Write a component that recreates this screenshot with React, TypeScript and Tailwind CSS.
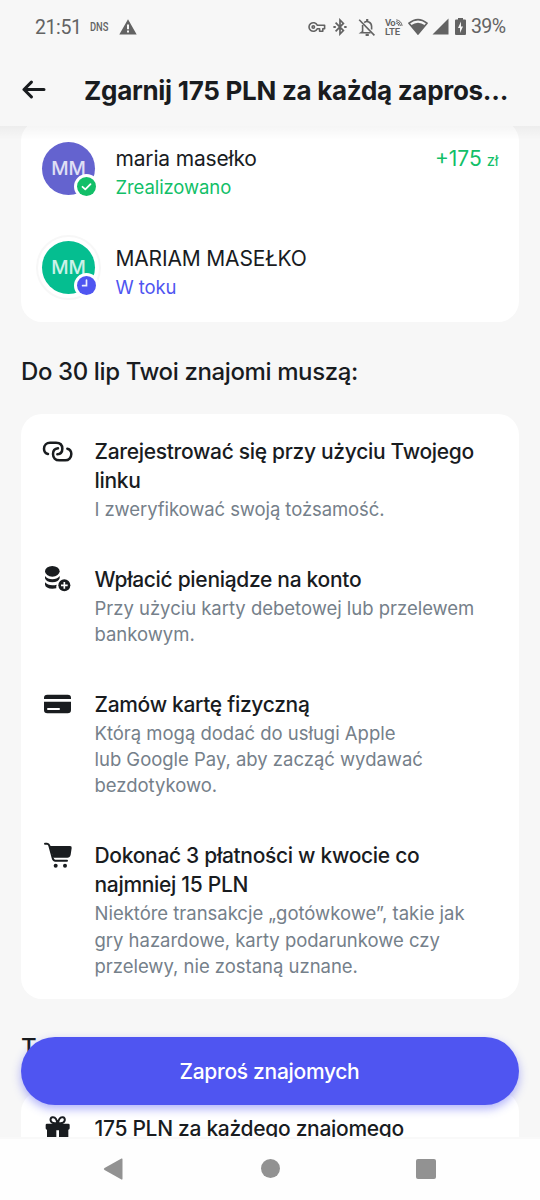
import type { ReactNode } from "react";

function StatusBar() {
  return (
    <div className="flex h-[54px] shrink-0 items-center justify-between pl-[35px] pr-[34px] text-[#636363]">
      <div className="flex items-center">
        <span className="w-[46px] whitespace-nowrap pt-px font-[Roboto] text-[19.5px] leading-6 tracking-[-0.4px]">21:51</span>
        <span className="ml-[9px] w-[19px] whitespace-nowrap font-[Roboto] text-[12px] font-medium leading-4">
          <span className="inline-block origin-left scale-x-[0.78]">DNS</span>
        </span>
        <svg className="ml-[10px]" width="18" height="16" viewBox="0 0 18 16" fill="currentColor">
          <path fillRule="evenodd" d="M9 .3 17.7 15.6H.3zM8 5.6v4.6h2V5.6zM8 11.6v2h2v-2z" />
        </svg>
      </div>
      <div className="flex items-center">
        <svg width="18" height="12" viewBox="0 0 18 12" fill="none" stroke="currentColor" strokeWidth="1.6" strokeLinejoin="round">
          <path d="M9.2 4.2A4.3 4.3 0 1 0 9.2 7.8H11.6V10.2H14.8V7.8H16.6V4.2Z" />
          <circle cx="5.3" cy="6" r="1.2" />
        </svg>
        <svg className="ml-[7px]" width="14" height="18" viewBox="0 0 14 18" fill="none" stroke="currentColor" strokeWidth="1.7">
          <path d="M2.6 4.6 10.4 12.6 7 16V2L10.4 5.4 2.6 13.4" />
          <path d="M.4 9h2.4M11.2 9h2.4" strokeWidth="2.2" />
        </svg>
        <svg className="ml-[11px]" width="18" height="19" viewBox="0 0 18 19" fill="none" stroke="currentColor" strokeWidth="1.6">
          <path d="M1.2 1.8 16.4 17.4" />
          <path d="M4.6 7V13.6L3 14.8H12.6M6.2 4.6C8.6 2.4 13.6 3.8 13.6 8.6V11.6" />
          <path d="M9.2 1v2.4M7.6 16.9h3.2" strokeWidth="2.2" />
        </svg>
        <span className="ml-[9px] flex w-[18px] flex-col font-[Roboto] text-[9.5px] font-semibold leading-[8px]">
          <span className="flex h-[8px] items-end">
            <span className="leading-[8px] tracking-[-0.6px]">Vo</span>
            <svg width="8" height="8" viewBox="0 0 8 8" fill="none" stroke="currentColor" strokeWidth="1">
              <path d="M1.2 4.2A3 3 0 0 1 4 7M1.2 2.5A4.8 4.8 0 0 1 5.6 7M1.2.8A6.4 6.4 0 0 1 7.2 7" />
            </svg>
          </span>
          <span className="leading-[9px]">LTE</span>
        </span>
        <svg className="-mt-[2px] ml-[5px]" width="20" height="17" viewBox="0 0 20 17">
          <path d="M1 5.2Q10-2 19 5.2L10 16Z" fill="none" stroke="currentColor" strokeWidth="1.7" strokeLinejoin="round" />
          <path d="M3 7.2Q10 2.2 17 7.2L10 16Z" fill="currentColor" />
        </svg>
        <svg className="-mt-[2px] ml-[4px]" width="17" height="17" viewBox="0 0 17 17" fill="currentColor">
          <path d="M16.5.5V16.5H.5Z" />
        </svg>
        <svg className="-mt-[2px] ml-[6px]" width="11" height="17" viewBox="0 0 11 17" fill="currentColor">
          <path fillRule="evenodd" d="M3 0H8V1.6H10Q11 1.6 11 2.6V16Q11 17 10 17H1Q0 17 0 16V2.6Q0 1.6 1 1.6H3ZM6 3.6 3 10H5V15L8 8.6H6Z" />
        </svg>
        <span className="ml-[5px] w-[35px] whitespace-nowrap font-[Roboto] text-[19.5px] leading-6 tracking-[-0.6px]">39%</span>
      </div>
    </div>
  );
}

function AppBar() {
  return (
    <header className="flex h-[72px] shrink-0 items-center pl-[22px]">
      <svg width="24" height="20" viewBox="0 0 24 20" fill="none" stroke="#191c1f" strokeWidth="3" strokeLinecap="round" strokeLinejoin="round">
        <path d="M22 9.5H2M9.4 2.1 2 9.5l7.4 7.4" />
      </svg>
      <h1 className="ml-[38px] whitespace-nowrap pt-px text-[26px] font-bold leading-8 tracking-[-0.28px]">
        Zgarnij 175 PLN za każdą zapros...
      </h1>
    </header>
  );
}

function Friend({ name, status, color, statusColor, ring, badge, amount }: {
  name: string;
  status: string;
  color: string;
  statusColor: string;
  ring?: boolean;
  badge: ReactNode;
  amount?: ReactNode;
}) {
  return (
    <div className="flex h-[53px] items-start">
      <div className={`relative flex size-[53px] items-center justify-center rounded-full ${color} ${ring ? "outline-2 outline-offset-[4px] outline-[#f7f7f7]" : ""}`}>
        <span className="text-[19px] font-medium leading-none tracking-[-0.2px] text-white/80">MM</span>
        <span className="absolute left-[32px] top-[32px] flex size-[25px] items-center justify-center rounded-full bg-white">
          {badge}
        </span>
      </div>
      <div className={`ml-[20.5px] flex flex-col ${ring ? "pt-[3px]" : "pt-[2px]"}`}>
        <span className="whitespace-nowrap text-[21px] leading-[29px] tracking-[-0.17px]">{name}</span>
        <span className={`whitespace-nowrap text-[18.5px] leading-[28px] tracking-[-0.1px] ${statusColor}`}>{status}</span>
      </div>
      {amount}
    </div>
  );
}

function Step({ icon, title, children }: { icon: ReactNode; title: ReactNode; children: ReactNode }) {
  return (
    <div className="flex">
      <div className="w-[52.5px] shrink-0">{icon}</div>
      <div className="flex flex-col whitespace-nowrap">
        <h3 className="text-[21px] font-[450] leading-[29px] tracking-[-0.31px]">{title}</h3>
        <p className="mt-px text-[18.5px] leading-[26.3px] tracking-[-0.02px] text-[#75808a]">{children}</p>
      </div>
    </div>
  );
}

const LinkIcon = () => (
  <svg className="mt-[4px]" width="32" height="22" viewBox="0 0 96 66" fill="none" stroke="#191c1f" strokeWidth="7.5" strokeLinecap="round">
    <path d="M18 39C10 37 6 31 6 23C6 12 14 5 24 5H42C54 5 61 12 61 23C61 32 55 39 46 40" />
    <path d="M76 23C84 25 88 31 88 39C88 50 80 58 70 58H52C40 58 33 50 33 39C33 30 39 23 48 22" />
  </svg>
);

const CoinsIcon = () => (
  <svg width="32" height="29" viewBox="0 0 96 87" fill="#191c1f">
    <ellipse cx="31" cy="19" rx="22" ry="16" />
    <path d="M9 33Q17 43 31 43T53 33V40Q49 52 31 52T9 40ZM9 52Q17 61 31 61Q38 61 44 59Q42 65 43 70Q38 71 31 71Q11 70 9 59Z" />
    <circle cx="67" cy="61" r="18" />
    <path d="M67 51V71M57 61H77" stroke="white" strokeWidth="5" />
  </svg>
);

const CardIcon = () => (
  <svg className="mt-[3px]" width="32" height="22" viewBox="0 0 96 66" fill="#191c1f">
    <path d="M6 18V14Q6 5 16 5H77Q87 5 87 14V18ZM6 26H87V51Q87 61 77 61H16Q6 61 6 51Z" />
    <path d="M18 48H51" stroke="white" strokeWidth="6" strokeLinecap="round" />
  </svg>
);

const CartIcon = () => (
  <svg width="32" height="29" viewBox="0 0 96 87">
    <path d="M9 8H15Q20 8 22 14L32 51Q34 59 40 59H75" fill="none" stroke="#191c1f" strokeWidth="6" strokeLinecap="round" />
    <path d="M23 15H84Q90 15 89 21L86 41Q84 50 76 50H34Z" fill="#191c1f" />
    <circle cx="41" cy="74" r="6" fill="#191c1f" />
    <circle cx="69" cy="74" r="6" fill="#191c1f" />
  </svg>
);

const GiftIcon = () => (
  <svg width="32" height="32" viewBox="0 0 96 96" fill="#191c1f">
    <path d="M15 32H79Q83 32 83 36V46Q83 50 79 50V79Q79 87 71 87H51V52H43V87H23Q15 87 15 79V50Q11 50 11 46V36Q11 32 15 32Z" />
    <path d="M46 31H38C24 31 22 15 31 13C41 11 45 22 46 31ZM48 31H56C70 31 72 15 63 13C53 11 49 22 48 31Z" fill="none" stroke="#191c1f" strokeWidth="6" />
  </svg>
);

export default function App() {
  return (
    <div className="flex h-[1200px] w-[540px] flex-col overflow-hidden bg-[#f7f7f7] font-[Inter,sans-serif] text-[#191c1f]">
      <StatusBar />
      <AppBar />
      <main className="relative flex h-[1011px] shrink-0 flex-col overflow-hidden px-[21px]">
        <section className="-mt-[6px] flex h-[202px] shrink-0 flex-col gap-[46px] rounded-[21px] bg-white px-[21px] pt-[22px]">
          <Friend
            name="maria masełko"
            status="Zrealizowano"
            color="bg-[#6463cf]"
            statusColor="text-[#12bf68]"
            badge={
              <svg width="19" height="19" viewBox="0 0 19 19">
                <circle cx="9.5" cy="9.5" r="9.5" fill="#12bf68" />
                <path d="m5.5 9.8 2.8 2.6 5.2-5.2" fill="none" stroke="white" strokeWidth="1.8" strokeLinecap="round" strokeLinejoin="round" />
              </svg>
            }
            amount={
              <span className="ml-auto whitespace-nowrap pt-[2px] text-[21px] leading-[29px] text-[#12bf68]">
                +175 <span className="-ml-px text-[15px] tracking-[-0.3px]">zł</span>
              </span>
            }
          />
          <Friend
            name="MARIAM MASEŁKO"
            status="W toku"
            color="bg-[#05be90]"
            statusColor="text-[#4f55f1]"
            ring
            badge={
              <svg width="19" height="19" viewBox="0 0 19 19">
                <circle cx="9.5" cy="9.5" r="9.5" fill="#4f55f1" />
                <path d="M9.5 4.2V9.7H5.6" fill="none" stroke="white" strokeOpacity=".9" strokeWidth="1.7" strokeLinecap="round" />
              </svg>
            }
          />
        </section>

        <h2 className="mt-[34px] shrink-0 whitespace-nowrap text-[24px] font-[450] leading-[32px] tracking-[-0.38px]">Do 30 lip Twoi znajomi muszą:</h2>

        <section className="mt-[26px] flex h-[585px] shrink-0 flex-col gap-[42.5px] rounded-[21px] bg-white pl-[21px] pt-[23px]">
          <Step icon={<LinkIcon />} title={<>Zarejestrować się przy użyciu Twojego<br />linku</>}>
            <span className="tracking-[-0.09px]">I zweryfikować swoją tożsamość.</span>
          </Step>
          <Step icon={<CoinsIcon />} title="Wpłacić pieniądze na konto">
            Przy użyciu karty debetowej lub przelewem<br />bankowym.
          </Step>
          <Step icon={<CardIcon />} title="Zamów kartę fizyczną">
            Którą mogą dodać do usługi Apple<br />lub Google Pay, aby zacząć wydawać<br />bezdotykowo.
          </Step>
          <Step icon={<CartIcon />} title={<>Dokonać 3 płatności w kwocie co<br />najmniej 15 PLN</>}>
            Niektóre transakcje „gotówkowe”, takie jak<br />gry hazardowe, karty podarunkowe czy<br />przelewy, nie zostaną uznane.
          </Step>
        </section>

        <h2 className="mt-[33px] shrink-0 text-[24px] font-[450] leading-[32px]">T</h2>

        <section className="mt-[27px] flex h-[120px] shrink-0 rounded-[21px] bg-white pl-[21px] pt-[22px]">
          <div className="w-[52.5px] shrink-0"><GiftIcon /></div>
          <h3 className="mt-px whitespace-nowrap text-[21px] font-[450] leading-[29px] tracking-[-0.3px]">175 PLN za każdego znajomego</h3>
        </section>

        <div className="absolute inset-x-0 top-0 h-[14px] bg-linear-to-b from-black/4 to-transparent" />
        <button className="absolute left-[21px] top-[911px] flex h-[68px] w-[498px] items-center justify-center rounded-full bg-[#4f55f1] pr-px text-[21px] font-medium leading-[29px] tracking-[-0.3px] text-white shadow-[0_4px_10px_rgba(79,85,241,0.45)]">
          Zaproś znajomych
        </button>
      </main>

      <nav className="flex h-[63px] shrink-0 items-center justify-between border-t-2 border-[#f9f9f9] bg-[#fefefe] pb-[2px] pl-[103px] pr-[104px] text-[#929292]">
        <svg width="20" height="22" viewBox="0 0 20 22" fill="currentColor">
          <path d="M18.5.5Q19.5 0 19.5 1.5V20.5Q19.5 22 18.5 21.5L1.5 12Q0 11 1.5 10Z" />
        </svg>
        <span className="ml-[1px] size-[19px] rounded-full bg-current" />
        <span className="size-[20px] rounded-[2px] bg-current" />
      </nav>
    </div>
  );
}
